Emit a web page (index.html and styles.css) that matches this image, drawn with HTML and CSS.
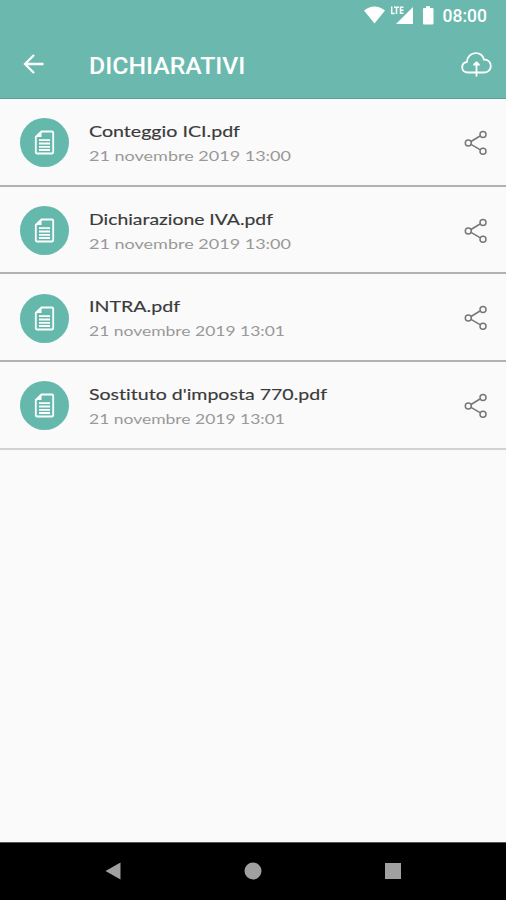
FILE: index.html
```html
<!DOCTYPE html>
<html lang="it">
<head>
<meta charset="utf-8">
<title>Dichiarativi</title>
<link rel="stylesheet" href="styles.css">
</head>
<body>
<svg class="defs" width="0" height="0" aria-hidden="true">
  <symbol id="doc" viewBox="0 0 21 25"><path d="M7.500 1.500H18a1.200 1.200 0 0 1 1.200 1.200v19.600a1.200 1.200 0 0 1-1.200 1.200H3a1.200 1.200 0 0 1-1.200-1.200V7z"/><path class="fold" d="M7.500 1.500V7H1.800z"/><path d="M5 10.200h11M5 13.500h11M5 16.800h11M5 20h11"/></symbol>
  <symbol id="share" viewBox="0 0 24 26"><path d="M7 11.500 16 6M7 14.300l9 5.300"/><circle cx="4.300" cy="13" r="3"/><circle cx="19" cy="4.500" r="3"/><circle cx="19" cy="21.300" r="3"/></symbol>
</svg>
<div class="screen">
  <header class="top">
    <div class="status">
      <svg class="signals" width="76" height="22" viewBox="0 0 76 22">
        <path d="M0 5.500Q10.500-2.500 21 5.500L10.500 18.500z"/>
        <path d="M49 2v17H32z"/>
        <path class="gap" d="M26 0h14.500v9.500H26z"/>
        <path class="lte" d="M27.700 1.500v7h3M30 2.200h5M32.500 2v7M39.500 2.200h-3v6.100h3M36.500 5.200h3"/>
        <path d="M60 3H62V1.200h4V3h2.500q1 0 1 1v14.500q0 1-1 1h-8.500q-1 0-1-1V4q0-1 1-1z"/>
      </svg>
      <span class="clock">08:00</span>
    </div>
    <div class="bar">
      <svg class="back" width="22" height="22" viewBox="0 0 22 22"><path d="M20.500 11H2.500M11 2 2 11l9 9"/></svg>
      <h1>DICHIARATIVI</h1>
      <svg class="cloud" width="31" height="27" viewBox="0 0 31 27"><path d="M8 21.500H7C3.500 21.500 1.200 19.300 1.200 16.200c0-2.700 1.900-4.800 4.600-5.200C6.200 5.600 9.900 2.200 14.700 2.200c4.200 0 7.300 2.500 8.200 6.300 4.100 0 6.900 2.700 6.900 6.500s-2.800 6.500-6.500 6.500H8M15.500 25.500V13"/><path class="tip" d="M12 14.500q0-2 1.500-2.500 2-2.800 4 0 1.500.500 1.500 2.500z"/></svg>
    </div>
  </header>
  <main class="list">
    <div class="row">
      <span class="disc"><svg><use href="#doc"/></svg></span>
      <svg class="label"><text class="name" x="0" y="21" textLength="151" lengthAdjust="spacingAndGlyphs">Conteggio ICI.pdf</text><text class="date" x="0" y="45" textLength="202" lengthAdjust="spacingAndGlyphs">21 novembre 2019 13:00</text></svg>
      <svg class="share"><use href="#share"/></svg>
    </div>
    <div class="row">
      <span class="disc"><svg><use href="#doc"/></svg></span>
      <svg class="label"><text class="name" x="0" y="21" textLength="184" lengthAdjust="spacingAndGlyphs">Dichiarazione IVA.pdf</text><text class="date" x="0" y="45" textLength="202" lengthAdjust="spacingAndGlyphs">21 novembre 2019 13:00</text></svg>
      <svg class="share"><use href="#share"/></svg>
    </div>
    <div class="row">
      <span class="disc"><svg><use href="#doc"/></svg></span>
      <svg class="label"><text class="name" x="0" y="21" textLength="91" lengthAdjust="spacingAndGlyphs">INTRA.pdf</text><text class="date" x="0" y="45" textLength="196" lengthAdjust="spacingAndGlyphs">21 novembre 2019 13:01</text></svg>
      <svg class="share"><use href="#share"/></svg>
    </div>
    <div class="row last">
      <span class="disc"><svg><use href="#doc"/></svg></span>
      <svg class="label"><text class="name" x="0" y="21" textLength="238" lengthAdjust="spacingAndGlyphs">Sostituto d'imposta 770.pdf</text><text class="date" x="0" y="45" textLength="196" lengthAdjust="spacingAndGlyphs">21 novembre 2019 13:01</text></svg>
      <svg class="share"><use href="#share"/></svg>
    </div>
  </main>
  <nav class="nav">
    <svg width="18" height="18"><path d="M16.500 .5v17L1.500 9z"/></svg>
    <svg width="18" height="18"><circle cx="9" cy="9" r="8.500"/></svg>
    <svg width="18" height="18"><rect x="1" y="1" width="16" height="16"/></svg>
  </nav>
</div>
</body>
</html>
```
FILE: styles.css
```css
* { box-sizing: border-box; }
body { margin: 0; background: #fafafa; font-family: Roboto, sans-serif; }
svg { display: block; flex: none; }
.screen { height: 900px; display: flex; flex-direction: column; overflow: hidden; }
.top { height: 99px; background: #6bb9ae; color: #fff; border-bottom: 1px solid #58a399; }
.status { height: 32px; padding: 5px 19px 0 364px; display: flex; justify-content: space-between; }
.signals { fill: #fff; }
.signals .gap { fill: #6bb9ae; }
.signals .lte { fill: none; stroke: #fff; stroke-width: 1.5; }
.clock { font-size: 17.5px; font-weight: 500; line-height: 22px; }
.bar { height: 66px; display: flex; align-items: center; padding: 0 14px 2px 23px; }
.back { fill: none; stroke: #fff; stroke-width: 2.3; }
h1 { flex: 1; margin: 3px 0 0 44px; font-size: 24.8px; line-height: 30px; font-weight: 500; }
.cloud { fill: none; stroke: #fff; stroke-width: 1.8; }
.cloud .tip { fill: #fff; stroke: none; }
.list { flex: 1; }
.row { height: 87.7px; display: flex; align-items: center; padding: 2px 18px 0 20px; border-bottom: 2px solid #b1b1b1; }
.row.last { border-color: #d2d2d2; }
.disc { width: 49px; height: 49px; border-radius: 50%; background: #65b9ac; display: grid; place-items: center; flex: none; }
.disc svg { width: 21px; height: 25px; fill: none; stroke: #fff; stroke-width: 1.8; }
.disc .fold, .fold { fill: #fff; stroke: none; }
.label { flex: 1; min-width: 0; height: 54px; margin-left: 20px; overflow: visible; font-family: Lato, sans-serif; font-variant-ligatures: none; }
.name { font-size: 15.3px; fill: #3a3a3a; stroke: #3a3a3a; stroke-width: .15px; }
.date { font-size: 14.2px; fill: #999; }
.share { width: 24px; height: 26px; fill: none; stroke: #777; stroke-width: 1.5; }
.nav { height: 58px; background: #000; display: flex; align-items: center; justify-content: space-between; padding: 0 104px 2px; border-top: 1px solid #555; }
.nav svg { fill: #a0a0a0; }
.defs { position: absolute; }
```
